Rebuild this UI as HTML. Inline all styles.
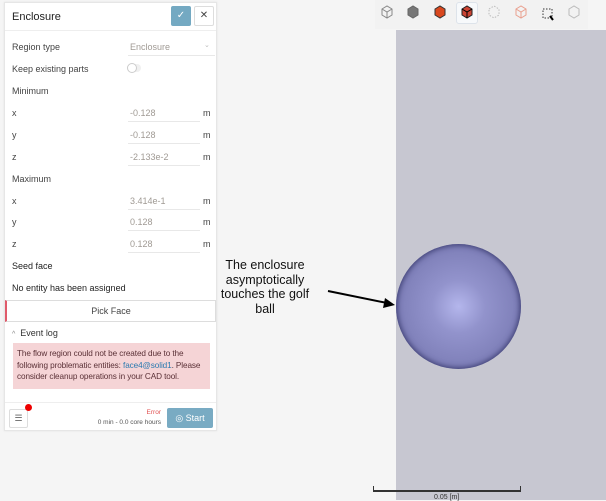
<!DOCTYPE html>
<html><head><style>
*{margin:0;padding:0;box-sizing:border-box}
body{width:606px;height:500px;overflow:hidden;background:#f5f5f5;font-family:"Liberation Sans",sans-serif;position:relative}
.a{position:absolute}
.p{left:4px;top:2px;width:213px;height:429px;background:#fff;border:1px solid #e6e6e6;box-shadow:0 0 2px rgba(0,0,0,.08)}
.l{font-size:9px;color:#444;position:absolute;left:7px}
.v{font-size:9px;color:#a09a94;position:absolute;left:125px}
.u{font-size:9px;color:#444;position:absolute;left:198px}
.ln{position:absolute;left:123px;width:72px;height:1px;background:#e8e8e8}
</style></head><body>
<div class="a" style="left:396px;top:30px;width:210px;height:470px;background:#c7c7d1"></div>
<div class="a" style="left:375px;top:0;width:213px;height:29px;background:#f2f2f2"></div>
<div class="a" style="left:456px;top:2px;width:22px;height:22px;border:1px solid #dde3ea;border-radius:3px;background:#f7f9fb"></div>
<svg class="a" style="left:375px;top:0" width="213" height="29">
<g fill="none" stroke-width="1">
<path d="M7 9l5-3 5 3v6l-5 3-5-3z M7 9l5 3 5-3 M12 12v6" stroke="#888"/>
<path d="M33 9l5-3 5 3v6l-5 3-5-3z" fill="#777" stroke="#666"/>
<path d="M60 9l5-3 5 3v6l-5 3-5-3z" fill="#d9481e" stroke="#333"/>
<path d="M87 9l5-3 5 3v6l-5 3-5-3z" fill="#c43" stroke="#222"/><path d="M87 9l5 3 5-3M92 12v6" stroke="#000"/>
<path d="M114 9l5-3 5 3v6l-5 3-5-3z" stroke="#bbb" stroke-dasharray="1.5 1.5"/>
<path d="M141 9l5-3 5 3v6l-5 3-5-3z M141 9l5 3 5-3 M146 12v6" stroke="#e9a08f"/>
<path d="M168 9h9v9h-9z" stroke="#333" stroke-dasharray="1.5 1.5"/><path d="M175 16l3 4" stroke="#000" stroke-width="2"/>
<path d="M194 9l5-3 5 3v6l-5 3-5-3z" stroke="#bbb"/>
</g></svg>
<div class="a" style="left:396px;top:244px;width:125px;height:125px;border-radius:50%;background:radial-gradient(circle at 50% 50%,#b4b6ec 0%,#9293cc 30%,#8081ba 65%,#6a6ba3 88%,#4a4b80 98%,#33346a 100%);box-shadow:inset 0 0 6px 1px #3a3b70"></div>
<div class="a" style="left:373px;top:490px;width:148px;height:2px;background:#333"></div>
<div class="a" style="left:373px;top:486px;width:1px;height:5px;background:#333"></div>
<div class="a" style="left:520px;top:486px;width:1px;height:5px;background:#333"></div>
<div class="a" style="left:434px;top:494px;font-size:7px;color:#333">0.05 [m]</div>
<div class="a" style="left:215px;top:258px;width:100px;text-align:center;font-size:12.5px;line-height:14.5px;color:#111">The enclosure asymptotically touches the golf ball</div>
<svg class="a" style="left:325px;top:285px" width="75" height="25"><path d="M3 6L62 18" stroke="#000" stroke-width="2"/><path d="M70 20L58 23 60 13z" fill="#000"/></svg>
<div class="a p">
<div class="a" style="left:7px;top:8px;font-size:11px;color:#222">Enclosure</div>
<div class="a" style="left:166px;top:3px;width:20px;height:20px;background:#74a9c2;border-radius:2px;color:#fff;font-size:10px;text-align:center;line-height:20px">✓</div>
<div class="a" style="left:189px;top:3px;width:20px;height:20px;border:1px solid #ddd;border-radius:2px;color:#444;font-size:10px;text-align:center;line-height:18px">✕</div>
<div class="a" style="left:0;top:27px;width:211px;height:1px;background:#eee"></div>
<div class="l" style="top:39px">Region type</div><div class="v" style="top:39px">Enclosure</div><div class="a" style="left:199px;top:38px;font-size:7px;color:#bbb">⌄</div>
<div class="ln" style="top:52px;width:87px"></div>
<div class="l" style="top:61px">Keep existing parts</div>
<div class="a" style="left:122px;top:61px;width:14px;height:8px;border-radius:4px;background:#f0f0f0"></div><div class="a" style="left:122px;top:60px;width:10px;height:10px;border-radius:50%;border:1px solid #ccc;background:#fff"></div>
<div class="l" style="top:83px">Minimum</div>
<div class="l" style="top:105px">x</div><div class="v" style="top:105px">-0.128</div><div class="u" style="top:105px">m</div><div class="ln" style="top:118px"></div>
<div class="l" style="top:127px">y</div><div class="v" style="top:127px">-0.128</div><div class="u" style="top:127px">m</div><div class="ln" style="top:140px"></div>
<div class="l" style="top:149px">z</div><div class="v" style="top:149px">-2.133e-2</div><div class="u" style="top:149px">m</div><div class="ln" style="top:162px"></div>
<div class="l" style="top:171px">Maximum</div>
<div class="l" style="top:193px">x</div><div class="v" style="top:193px">3.414e-1</div><div class="u" style="top:193px">m</div><div class="ln" style="top:206px"></div>
<div class="l" style="top:214px">y</div><div class="v" style="top:214px">0.128</div><div class="u" style="top:214px">m</div><div class="ln" style="top:227px"></div>
<div class="l" style="top:236px">z</div><div class="v" style="top:236px">0.128</div><div class="u" style="top:236px">m</div><div class="ln" style="top:249px"></div>
<div class="l" style="top:258px;color:#222">Seed face</div>
<div class="l" style="top:280px;color:#222">No entity has been assigned</div>
<div class="a" style="left:0;top:297px;width:211px;height:22px;border:1px solid #ddd;border-left:2px solid #e05a6a;font-size:9px;color:#444;text-align:center;line-height:20px">Pick Face</div>
<div class="l" style="top:325px;color:#333"><span style="font-size:7px;color:#888">^</span>&nbsp; Event log</div>
<div class="a" style="left:8px;top:340px;width:197px;height:46px;background:#f5d4d6;padding:5px 4px;font-size:8.2px;line-height:11.6px;letter-spacing:-0.1px;color:#5a3036;white-space:nowrap;overflow:hidden">The flow region could not be created due to the<br>following problematic entities: <span style="color:#2a7ab0">face4@solid1</span>. Please<br>consider cleanup operations in your CAD tool.</div>
<div class="a" style="left:0;top:399px;width:211px;height:1px;background:#eee"></div>
<div class="a" style="left:4px;top:406px;width:19px;height:19px;border:1px solid #ddd;border-radius:2px;font-size:9px;color:#666;text-align:center;line-height:17px">☰</div>
<div class="a" style="left:20px;top:401px;width:7px;height:7px;border-radius:50%;background:#e00"></div>
<div class="a" style="right:55px;top:406px;font-size:6.5px;color:#e05050">Error</div>
<div class="a" style="right:55px;top:416px;font-size:6.5px;color:#555;white-space:nowrap">0 min - 0.0 core hours</div>
<div class="a" style="left:162px;top:405px;width:46px;height:20px;background:#79abc3;border-radius:2px;color:#fff;font-size:9px;line-height:20px;text-align:center">◎ Start</div>
</div>
</body></html>
